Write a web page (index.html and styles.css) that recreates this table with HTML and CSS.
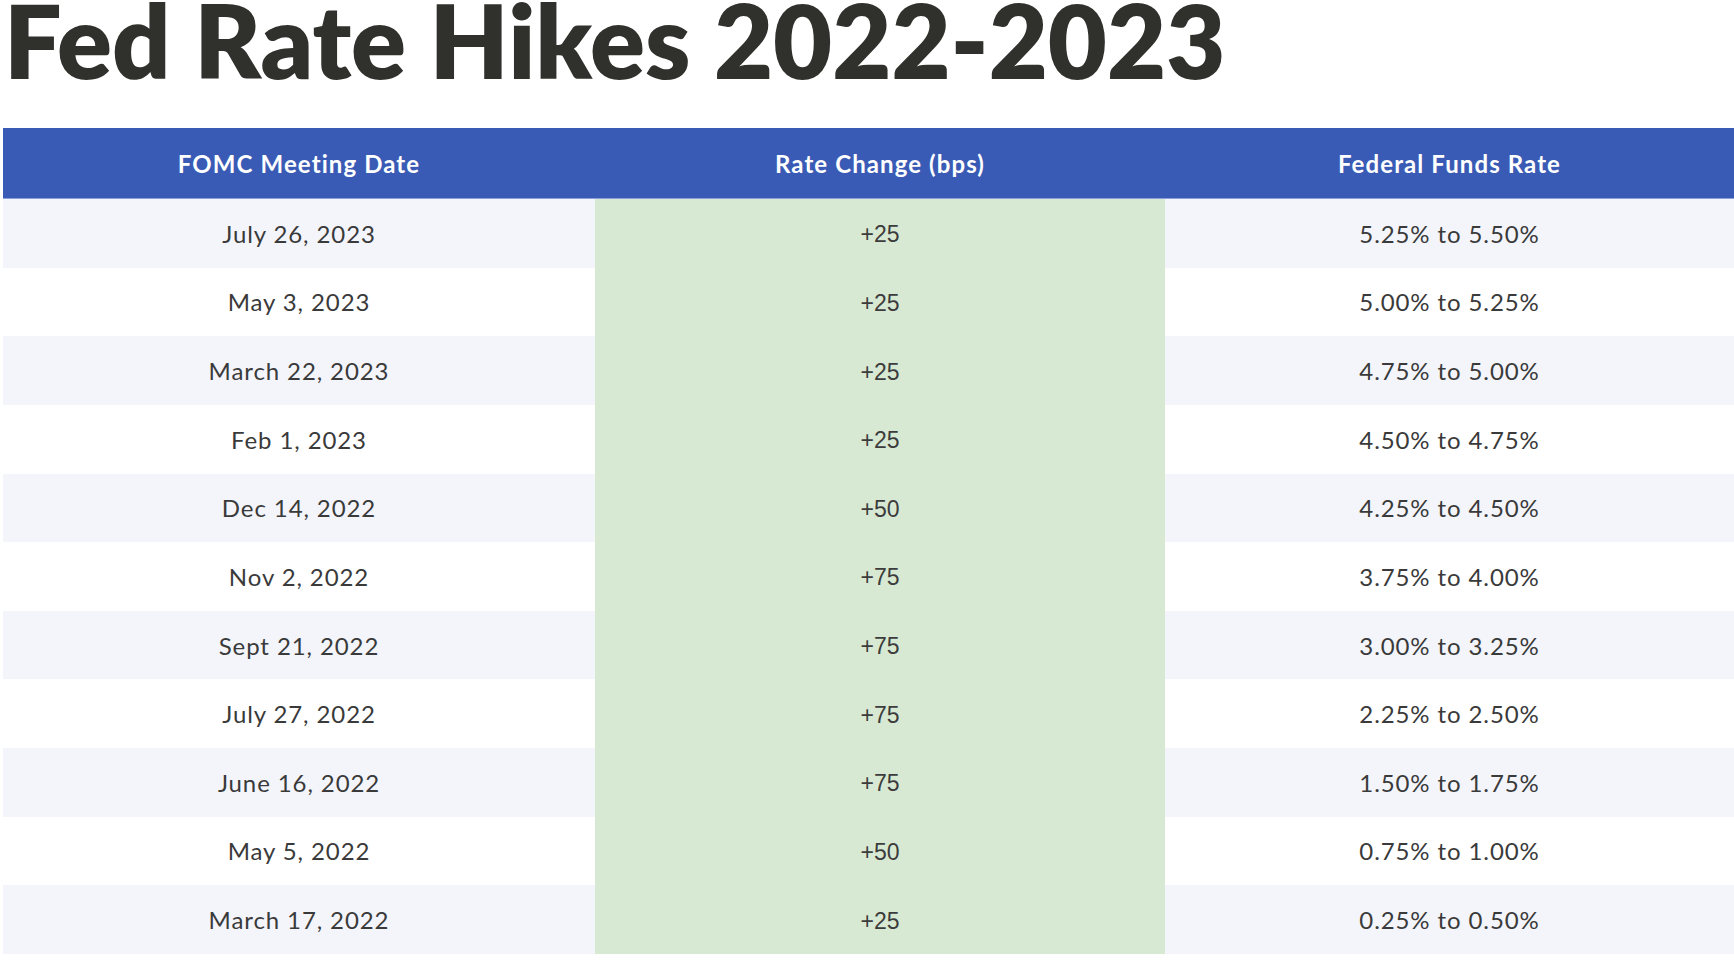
FILE: index.html
```html
<!DOCTYPE html>
<html lang="en">
<head>
<meta charset="utf-8">
<title>Fed Rate Hikes 2022-2023</title>
<link rel="stylesheet" href="styles.css">
</head>
<body>
<h1 class="title">Fed Rate Hikes 2022-2023</h1>
<div class="table">
  <div class="row head">
    <div class="cell">FOMC Meeting Date</div>
    <div class="cell">Rate Change (bps)</div>
    <div class="cell">Federal Funds Rate</div>
  </div>
  <div class="row alt"><div class="cell">July 26, 2023</div><div class="cell mid">+25</div><div class="cell">5.25% to 5.50%</div></div>
  <div class="row"><div class="cell">May 3, 2023</div><div class="cell mid">+25</div><div class="cell">5.00% to 5.25%</div></div>
  <div class="row alt"><div class="cell">March 22, 2023</div><div class="cell mid">+25</div><div class="cell">4.75% to 5.00%</div></div>
  <div class="row"><div class="cell">Feb 1, 2023</div><div class="cell mid">+25</div><div class="cell">4.50% to 4.75%</div></div>
  <div class="row alt"><div class="cell">Dec 14, 2022</div><div class="cell mid">+50</div><div class="cell">4.25% to 4.50%</div></div>
  <div class="row"><div class="cell">Nov 2, 2022</div><div class="cell mid">+75</div><div class="cell">3.75% to 4.00%</div></div>
  <div class="row alt"><div class="cell">Sept 21, 2022</div><div class="cell mid">+75</div><div class="cell">3.00% to 3.25%</div></div>
  <div class="row"><div class="cell">July 27, 2022</div><div class="cell mid">+75</div><div class="cell">2.25% to 2.50%</div></div>
  <div class="row alt"><div class="cell">June 16, 2022</div><div class="cell mid">+75</div><div class="cell">1.50% to 1.75%</div></div>
  <div class="row"><div class="cell">May 5, 2022</div><div class="cell mid">+50</div><div class="cell">0.75% to 1.00%</div></div>
  <div class="row alt"><div class="cell">March 17, 2022</div><div class="cell mid">+25</div><div class="cell">0.25% to 0.50%</div></div>
</div>
</body>
</html>
```

FILE: styles.css
```css
html, body {
  margin: 0;
  padding: 0;
  background: #ffffff;
}
body {
  font-family: "Lato", "Liberation Sans", sans-serif;
  color: #3a3a3a;
}
.title {
  margin: 0;
  padding: 0 0 0 4px;
  height: 128px;
  box-sizing: border-box;
  font-family: "Lato", "Liberation Sans", sans-serif;
  font-weight: 800;
  font-size: 102px;
  line-height: 79px;
  color: #30302c;
  white-space: nowrap;
}
.table {
  margin-left: 3px;
  display: flex;
  flex-direction: column;
}
.row {
  display: grid;
  grid-template-columns: 592px 570px 1fr;
  height: 68.64px;
  background: #ffffff;
}
.row.alt {
  background: #f3f5fa;
}
.row.head {
  height: 71px;
  background: #3a5bb5;
  border-bottom: 1px solid #8aa0d8;
  box-sizing: border-box;
  color: #ffffff;
  font-weight: 700;
}
.row.head .cell {
  font-size: 24px;
  letter-spacing: 1.1px;
}
.cell {
  display: flex;
  align-items: center;
  justify-content: center;
  font-size: 24px;
  letter-spacing: 0.9px;
}
.cell.mid {
  background: #d8e9d3;
  font-family: "Liberation Sans", Arial, sans-serif;
  font-size: 23px;
  letter-spacing: 0;
  color: #3c3c3c;
  padding-top: 3px;
  box-sizing: border-box;
}
```
